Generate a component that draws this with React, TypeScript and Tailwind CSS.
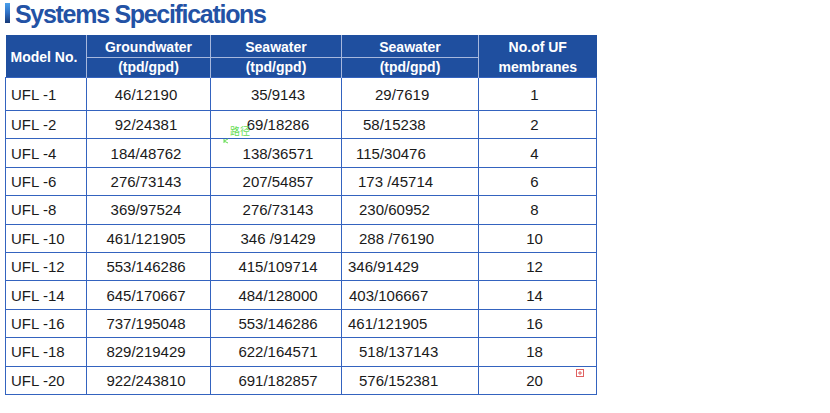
import React from "react";

type Row = {
  model: string;
  ground: string;
  sea1: string;
  sea2: string;
  sea2Pad: string;
  units: string;
};

const rows: Row[] = [
  { model: "UFL -1", ground: "46/12190", sea1: "35/9143", sea2: "29/7619", sea2Pad: "pl-[33px]", units: "1" },
  { model: "UFL -2", ground: "92/24381", sea1: "69/18286", sea2: "58/15238", sea2Pad: "pl-[21px]", units: "2" },
  { model: "UFL -4", ground: "184/48762", sea1: "138/36571", sea2: "115/30476", sea2Pad: "pl-[14px]", units: "4" },
  { model: "UFL -6", ground: "276/73143", sea1: "207/54857", sea2: "173 /45714", sea2Pad: "pl-[16px]", units: "6" },
  { model: "UFL -8", ground: "369/97524", sea1: "276/73143", sea2: "230/60952", sea2Pad: "pl-[17px]", units: "8" },
  { model: "UFL -10", ground: "461/121905", sea1: "346 /91429", sea2: "288 /76190", sea2Pad: "pl-[17px]", units: "10" },
  { model: "UFL -12", ground: "553/146286", sea1: "415/109714", sea2: "346/91429", sea2Pad: "pl-[6px]", units: "12" },
  { model: "UFL -14", ground: "645/170667", sea1: "484/128000", sea2: "403/106667", sea2Pad: "pl-[7px]", units: "14" },
  { model: "UFL -16", ground: "737/195048", sea1: "553/146286", sea2: "461/121905", sea2Pad: "pl-[6px]", units: "16" },
  { model: "UFL -18", ground: "829/219429", sea1: "622/164571", sea2: "518/137143", sea2Pad: "pl-[17px]", units: "18" },
  { model: "UFL -20", ground: "922/243810", sea1: "691/182857", sea2: "576/152381", sea2Pad: "pl-[17px]", units: "20" },
];

export default function App() {
  return (
    <div className="relative w-[830px] h-[413px] bg-white font-['Liberation_Sans',Arial,sans-serif] text-[#1a1a1a]">
      {/* title */}
      <div className="flex items-start h-[35px] pl-[5px]">
        <div className="w-[5px] h-[20px] mt-[3px] bg-gradient-to-b from-[#4aa0ec] via-[#2f6fc4] to-[#173a78]" />
        <h1 className="ml-[5px] pt-[2px] text-[25px] leading-none font-bold tracking-[-1.3px] text-[#2352a5]">
          Systems Specifications
        </h1>
      </div>

      {/* table */}
      <table className="ml-[5px] w-[591px] table-fixed border-collapse">
        <colgroup>
          <col className="w-[81px]" />
          <col className="w-[124px]" />
          <col className="w-[131px]" />
          <col className="w-[137px]" />
          <col className="w-[118px]" />
        </colgroup>
        <thead className="bg-[#1f4f9f] text-white text-[14px] font-bold leading-none">
          <tr className="h-[22px]">
            <th rowSpan={2} className="text-left pl-[5px] pt-[2px] border-r border-[#a7b8dd]">
              Model No.
            </th>
            <th className="pt-[3px] border-r border-b border-[#a7b8dd]">Groundwater</th>
            <th className="pt-[3px] border-r border-b border-[#a7b8dd]">Seawater</th>
            <th className="pt-[3px] border-r border-b border-[#a7b8dd]">Seawater</th>
            <th rowSpan={2} className="pt-[2px] leading-[20px]">
              No.of UF
              <br />
              membranes
            </th>
          </tr>
          <tr className="h-[20px]">
            <th className="border-r border-[#a7b8dd]">(tpd/gpd)</th>
            <th className="border-r border-[#a7b8dd]">(tpd/gpd)</th>
            <th className="border-r border-[#a7b8dd]">(tpd/gpd)</th>
          </tr>
        </thead>
        <tbody className="text-[15px] leading-none">
          {rows.map((r, i) => (
            <tr key={r.model} className={i === 0 ? "h-[33px]" : "h-[28.4px]"}>
              <td className="border-[1.5px] border-[#3463bf] pl-[5px]">{r.model}</td>
              <td className="border-[1.5px] border-[#3463bf] text-center pr-[5px]">{r.ground}</td>
              <td className="border-[1.5px] border-[#3463bf] text-center pl-[4px]">{r.sea1}</td>
              <td className={`border-[1.5px] border-[#3463bf] text-left ${r.sea2Pad}`}>{r.sea2}</td>
              <td className="border-[1.5px] border-[#3463bf] text-center pr-[6px]">{r.units}</td>
            </tr>
          ))}
        </tbody>
      </table>

      {/* editor leftovers seen in the shot */}
      <div className="absolute left-[230px] top-[126px] text-[10px] leading-none text-[#66dd55] font-['Noto_Sans_CJK_SC',sans-serif]">
        路径
      </div>
      <svg className="absolute left-[223px] top-[138px]" width="6" height="6" viewBox="0 0 6 6">
        <path d="M1 1 L1 5 M1 3 L5 1 M1 3 L5 5" stroke="#66dd55" strokeWidth="1" fill="none" />
      </svg>
      <svg className="absolute left-[576px] top-[369px]" width="8" height="8" viewBox="0 0 8 8">
        <rect x="0.5" y="0.5" width="7" height="7" fill="none" stroke="#e06060" strokeWidth="1" />
        <path d="M4 2 V6 M2 4 H6" stroke="#e06060" strokeWidth="1" />
      </svg>
    </div>
  );
}
